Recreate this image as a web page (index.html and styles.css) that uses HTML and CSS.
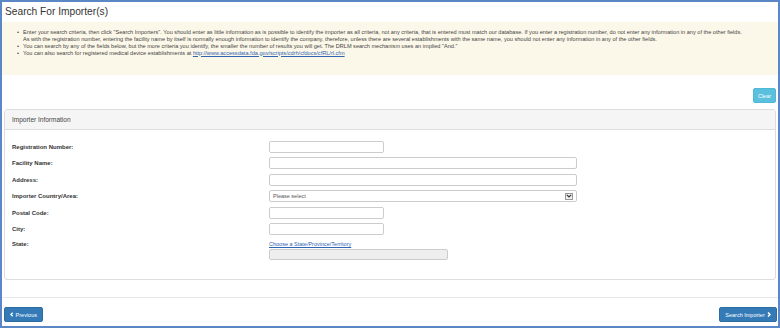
FILE: index.html
```html
<!DOCTYPE html>
<html lang="en">
<head>
  <meta charset="UTF-8">
  <title>Search For Importer(s)</title>
  <link rel="stylesheet" href="styles.css">
</head>
<body>
  <div class="frame">
    <div class="page-head">
      <h1>Search For Importer(s)</h1>
    </div>

    <div class="notice">
      <ul>
        <li>Enter your search criteria, then click "Search Importers". You should enter as little information as is possible to identify the importer as all criteria, not any criteria, that is entered must match our database. If you enter a registration number, do not enter any information in any of the other fields.<br>As with the registration number, entering the facility name by itself is normally enough information to identify the company, therefore, unless there are several establishments with the same name, you should not enter any information in any of the other fields.</li>
        <li>You can search by any of the fields below, but the more criteria you identify, the smaller the number of results you will get. The DRLM search mechanism uses an implied "And."</li>
        <li>You can also search for registered medical device establishments at <a href="#">http://www.accessdata.fda.gov/scripts/cdrh/cfdocs/cfRL/rl.cfm</a></li>
      </ul>
    </div>

    <div class="toolbar">
      <button class="btn btn-info">Clear</button>
    </div>

    <div class="panel">
      <div class="panel-heading">Importer Information</div>
      <div class="panel-body">
        <div class="form-row">
          <label>Registration Number:</label>
          <input type="text" class="short">
        </div>
        <div class="form-row">
          <label>Facility Name:</label>
          <input type="text" class="long">
        </div>
        <div class="form-row">
          <label>Address:</label>
          <input type="text" class="long">
        </div>
        <div class="form-row">
          <label>Importer Country/Area:</label>
          <div class="select long">
            <span>Please select</span>
            <span class="select-arrow">
              <svg width="6" height="4" viewBox="0 0 6 4"><polyline points="0.8,0.8 3,3 5.2,0.8" fill="none" stroke="#333" stroke-width="1.2"/></svg>
            </span>
          </div>
        </div>
        <div class="form-row">
          <label>Postal Code:</label>
          <input type="text" class="short">
        </div>
        <div class="form-row">
          <label>City:</label>
          <input type="text" class="short">
        </div>
        <div class="form-row state-row">
          <label>State:</label>
          <div class="state-field">
            <a href="#">Choose a State/Province/Territory</a>
            <input type="text" class="disabled" disabled>
          </div>
        </div>
      </div>
    </div>

    <div class="footer">
      <button class="btn btn-primary prev">
        <svg width="4" height="5" viewBox="0 0 4 5"><polyline points="3,0.5 1,2.5 3,4.5" fill="none" stroke="#fff" stroke-width="1.5"/></svg>
        Previous
      </button>
      <button class="btn btn-primary next">
        Search Importer
        <svg width="4" height="5" viewBox="0 0 4 5"><polyline points="1,0.5 3,2.5 1,4.5" fill="none" stroke="#fff" stroke-width="1.5"/></svg>
      </button>
    </div>
  </div>
</body>
</html>
```

FILE: styles.css
```css
body {
  margin: 0;
  padding: 0;
  font-family: "Liberation Sans", Arial, sans-serif;
  color: #333;
  background: #fff;
}

.frame {
  width: 780px;
  height: 328px;
  box-sizing: border-box;
  border: 2px solid #5b87c6;
  display: flex;
  flex-direction: column;
  overflow: hidden;
}

.page-head {
  height: 20px;
  padding-left: 3px;
}

.page-head h1 {
  margin: 0;
  font-size: 10.2px;
  font-weight: normal;
  line-height: 20px;
  color: #333;
}

.notice {
  height: 53px;
  box-sizing: border-box;
  background: #fcf8e9;
  padding: 6.5px 0 0 21px;
  font-size: 5.6px;
  line-height: 7px;
  color: #444;
}

.notice ul {
  margin: 0;
  padding: 0;
  list-style: none;
}

.notice li {
  position: relative;
}

.notice li::before {
  content: "\2022";
  position: absolute;
  left: -6px;
}

.notice a {
  color: #2f64b3;
}

.toolbar {
  display: flex;
  justify-content: flex-end;
  padding: 13px 2px 6px 0;
}

.btn {
  height: 15px;
  box-sizing: border-box;
  border-radius: 2px;
  font-family: inherit;
  font-size: 5.5px;
  color: #fff;
  padding: 0 5px;
  display: flex;
  align-items: center;
  gap: 2px;
  cursor: pointer;
}

.btn-info {
  width: 23px;
  justify-content: center;
  padding: 0;
  background: #5bc0de;
  border: 1px solid #4fb9d8;
}

.btn-primary {
  background: #337ab7;
  border: 1px solid #2e6da4;
}

.panel {
  margin: 0 2px;
  border: 1px solid #ddd;
  border-radius: 3px;
}

.panel-heading {
  height: 19px;
  line-height: 19px;
  background: #f5f5f5;
  border-bottom: 1px solid #ddd;
  padding-left: 7px;
  font-size: 6.5px;
  color: #444;
}

.panel-body {
  padding: 11px 7px 20px 7px;
  display: flex;
  flex-direction: column;
  gap: 4.4px;
}

.form-row {
  display: grid;
  grid-template-columns: 257px 1fr;
  align-items: center;
  height: 12px;
}

.form-row label {
  font-size: 6px;
  font-weight: bold;
  color: #333;
}

.form-row input,
.select {
  height: 12px;
  box-sizing: border-box;
  border: 1px solid #ccc;
  border-radius: 2px;
  background: #fff;
  margin: 0;
  padding: 0 3px;
}

.short { width: 115px; }
.long { width: 308px; }

.select {
  display: flex;
  align-items: center;
  justify-content: space-between;
  font-size: 5.5px;
  color: #555;
}

.select-arrow {
  width: 8px;
  height: 7px;
  box-sizing: border-box;
  border: 1px solid #999;
  background: #f0f0f0;
  display: flex;
  align-items: center;
  justify-content: center;
}

.state-row {
  height: 18px;
  margin-top: 2px;
  align-items: start;
}

.state-row label {
  line-height: 7px;
}

.state-field {
  display: flex;
  flex-direction: column;
  align-items: flex-start;
}

.state-field a {
  font-size: 5.5px;
  line-height: 7px;
  color: #2f64b3;
  margin-bottom: 1px;
}

.form-row input.disabled {
  width: 179px;
  height: 11px;
  background: #eee;
}

.footer {
  margin-top: 17px;
  border-top: 1px solid #e8e8e8;
  padding: 9px 1px 0 2px;
  display: flex;
  justify-content: space-between;
}

.prev { width: 39px; }
.next { width: 58px; justify-content: center; }
```
